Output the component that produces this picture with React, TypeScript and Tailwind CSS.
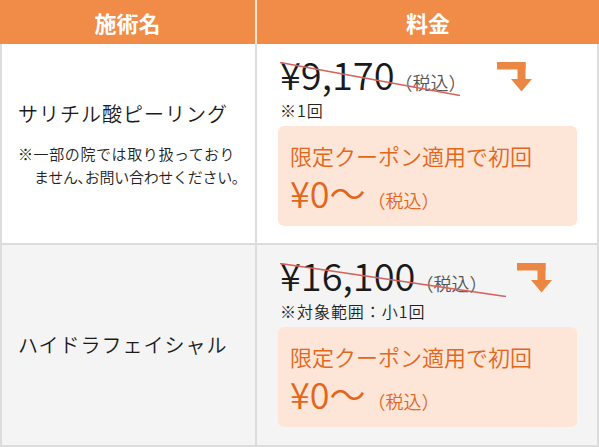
import React from 'react';

interface Row {
  name: string;
  note?: string[];
  price: string;
  sub: string;
  lineW: number;
  bg: string;
}

const rows: Row[] = [
  {
    name: 'サリチル酸ピーリング',
    note: ['※一部の院では取り扱っており', 'ません､お問い合わせください。'],
    price: '¥9,170',
    sub: '※1回',
    lineW: 180,
    bg: 'bg-white',
  },
  {
    name: 'ハイドラフェイシャル',
    price: '¥16,100',
    sub: '※対象範囲：小1回',
    lineW: 226,
    bg: 'bg-[#f4f4f4]',
  },
];

function DownArrow() {
  return (
    <svg width="36" height="30" viewBox="0 0 36 30" className="ml-[30px] mt-[7px] shrink-0">
      <rect x="0" y="0" width="28.5" height="7.5" fill="#ec8743" />
      <rect x="20.5" y="0" width="8" height="18" fill="#ec8743" />
      <polygon points="14,17 35,17 24.5,29.5" fill="#ec8743" />
    </svg>
  );
}

function PriceCell({ row }: { row: Row }) {
  return (
    <div className={`${row.bg} pl-[21px] pr-[20px] pt-[11px] font-[350]`}>
      <div className="flex items-start pl-[2px]">
        <div className="relative flex items-baseline">
          <span className="text-[38px] leading-[38px] text-[#1a1a1a]">{row.price}</span>
          <span className="text-[18px] leading-[20px] text-[#555]">（税込）</span>
          <svg
            className="absolute left-0 top-[7px] pointer-events-none"
            width={row.lineW}
            height="34"
            viewBox={`0 0 ${row.lineW} 34`}
          >
            <line x1="0" y1="0.5" x2={row.lineW} y2="33.5" stroke="#d6625c" strokeWidth="1.6" />
          </svg>
        </div>
        <DownArrow />
      </div>
      <div className="pl-[2px] text-[16px] leading-[20px] tracking-[0.06em] text-[#222] mt-[7px]">{row.sub}</div>
      <div className="mt-[6px] rounded-md bg-[#fde5d7] h-[100px] px-3 pt-[14px] text-[#e2661c]">
        <div className="text-[22px] leading-[30px]">限定クーポン適用で初回</div>
        <div className="flex items-baseline mt-[2px]">
          <span className="text-[36px] leading-[40px]">¥0〜</span>
          <span className="text-[18px] leading-[20px] ml-[2px]">（税込）</span>
        </div>
      </div>
    </div>
  );
}

export default function App() {
  return (
    <div className="w-[599px] h-[447px] bg-white font-['Noto_Sans_CJK_JP',sans-serif]">
      <div className="flex h-[44px] bg-[#f08b48] text-white font-bold text-[22px]">
        <div className="w-[255px] flex items-center justify-center">施術名</div>
        <div className="w-[2px] bg-[#fde6cc]" />
        <div className="flex-1 flex items-center justify-center">料金</div>
      </div>
      <div className="grid grid-cols-[253px_340px] grid-rows-[199px_200px] gap-[2px] bg-[#dcdcdc] border-x-2 border-b-2 border-[#dcdcdc]">
        {rows.map((row) => (
          <React.Fragment key={row.name}>
            <div className={`${row.bg} flex flex-col justify-center pl-[16px] font-[350]`}>
              <div className="text-[20px] leading-[28px] tracking-[0.05em] text-[#1a1a1a]">{row.name}</div>
              {row.note && (
                <div className="mt-[14px] text-[15px] leading-[23px] text-[#222] whitespace-nowrap">
                  <div className="tracking-[0.04em]">{row.note[0]}</div>
                  <div className="pl-[16px] tracking-[-0.02em]">{row.note[1]}</div>
                </div>
              )}
            </div>
            <PriceCell row={row} />
          </React.Fragment>
        ))}
      </div>
    </div>
  );
}
